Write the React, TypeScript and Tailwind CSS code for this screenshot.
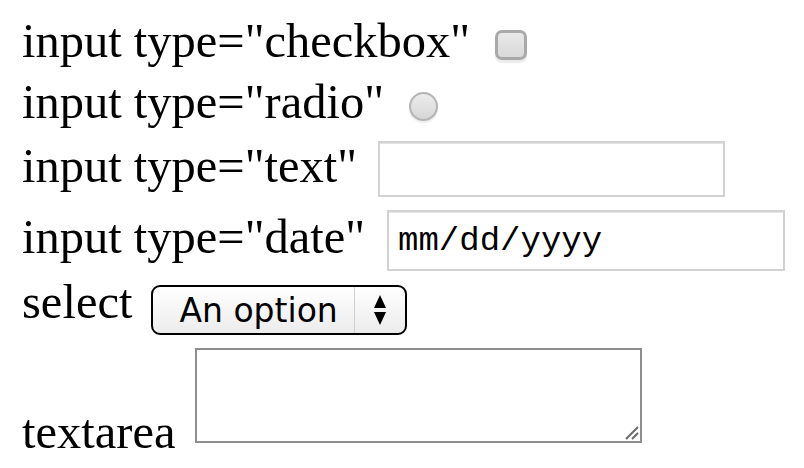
export default function App() {
  return (
    <div className="min-h-[468px] w-[804px] bg-white pl-[22px] pt-[14px] text-black [font-family:'Liberation_Serif','Times_New_Roman',serif] text-[48.5px] leading-[53px]">
      <div className="flex h-[61px] items-start">
        <span>input type="checkbox"</span>
        <input
          type="checkbox"
          className="ml-[25px] mt-[16px] h-[30px] w-[32px] appearance-none rounded-[7px] border-[3px] border-[#a9a9a9] bg-gradient-to-b from-[#e9e9e9] to-[#d9d9d9] shadow-[0_3px_1px_#ececec]"
        />
      </div>
      <div className="flex h-[64px] items-start">
        <span>input type="radio"</span>
        <input
          type="radio"
          className="ml-[25px] mt-[17px] h-[29px] w-[29px] appearance-none rounded-full border-[2px] border-[#b4b4b4] bg-gradient-to-b from-[#ececec] to-[#d6d6d6] shadow-[0_2px_1px_#ececec]"
        />
      </div>
      <div className="flex h-[71px] items-start">
        <span>input type="text"</span>
        <input
          type="text"
          className="ml-[21px] mt-[2px] h-[56px] w-[347px] border-2 border-[#d2d2d2] bg-white shadow-[inset_0_1px_0_#e6e6e6] outline-none"
        />
      </div>
      <div className="flex h-[65px] items-start">
        <span>input type="date"</span>
        <div className="ml-[22px] flex h-[61px] w-[398px] items-center border-2 border-[#d2d2d2] bg-white pl-[9px] shadow-[inset_0_1px_0_#e6e6e6] [font-family:'Liberation_Mono','Courier_New',monospace] text-[34px] leading-none">
          mm/dd/yyyy
        </div>
      </div>
      <div className="flex h-[73px] items-start">
        <span>select</span>
        <div className="ml-[19px] mt-[10px] flex h-[50px] w-[256px] items-stretch rounded-[9px] border-2 border-black bg-gradient-to-b from-white to-[#ececec] [font-family:'DejaVu_Sans','Verdana',sans-serif] text-[33px] leading-none">
          <div className="flex flex-1 items-center pl-[26px]">An option</div>
          <div className="flex w-[51px] items-center justify-center border-l border-[#cfcfcf]">
            <svg width="12" height="31" viewBox="0 0 12 31">
              <path d="M6 0 L12 13 L0 13 Z" fill="#000" />
              <path d="M0 17 L12 17 L6 30 Z" fill="#000" />
            </svg>
          </div>
        </div>
      </div>
      <div className="flex h-[110px] items-start">
        <span className="mt-[57px]">textarea</span>
        <div className="relative ml-[20px] h-[95px] w-[447px]">
          <textarea className="block h-full w-full resize-none border-2 border-[#8e8e8e] bg-white outline-none" />
          <svg className="absolute bottom-[3px] right-[3px]" width="14" height="14" viewBox="0 0 14 14">
            <path d="M1 13 L13 1 M7 13 L13 7" stroke="#6b6b6b" strokeWidth="2" />
          </svg>
        </div>
      </div>
    </div>
  )
}
